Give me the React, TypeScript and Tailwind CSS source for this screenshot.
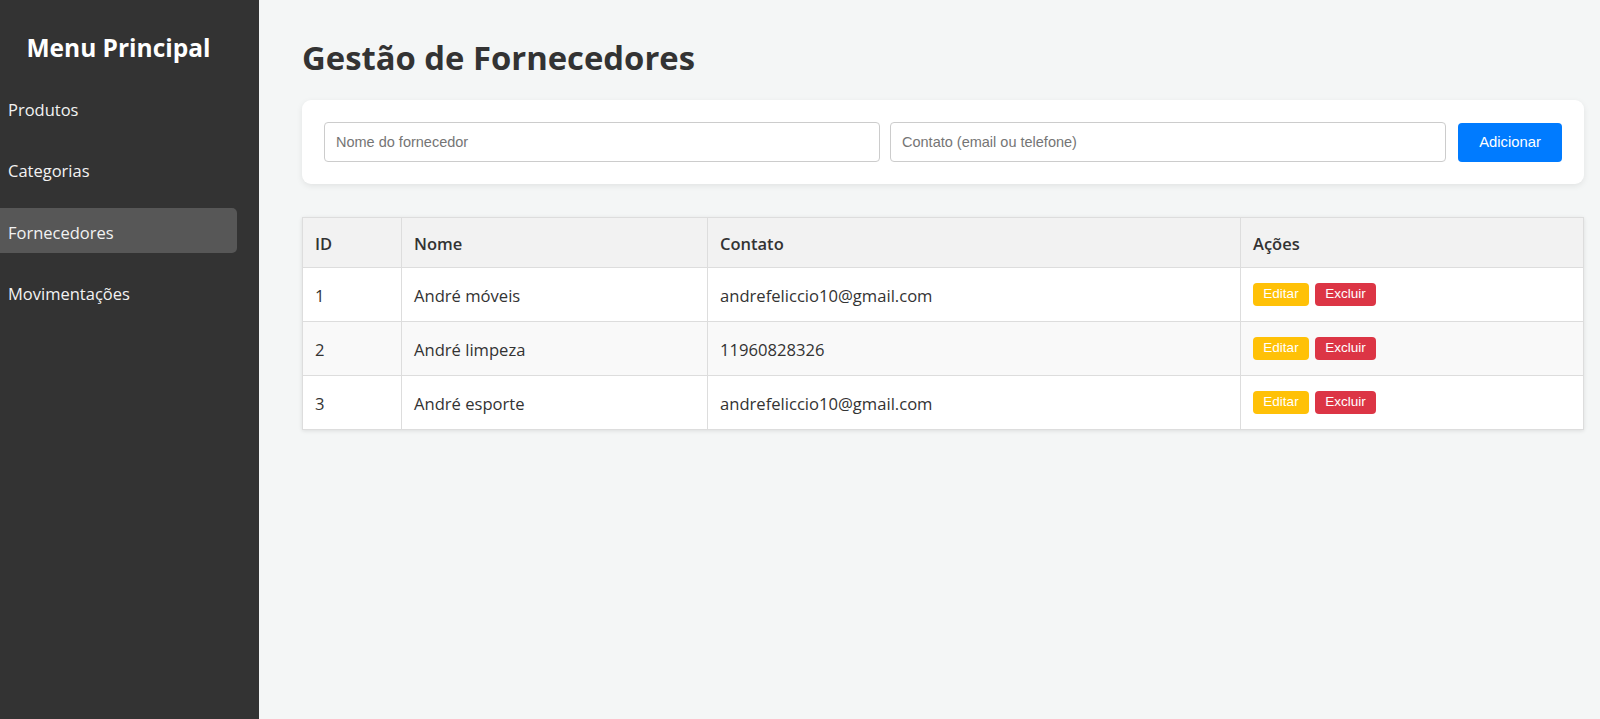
import React from 'react';

const menu = ['Produtos', 'Categorias', 'Fornecedores', 'Movimentações'];

const suppliers = [
  { id: 1, nome: 'André móveis', contato: 'andrefeliccio10@gmail.com' },
  { id: 2, nome: 'André limpeza', contato: '11960828326' },
  { id: 3, nome: 'André esporte', contato: 'andrefeliccio10@gmail.com' },
];

function Sidebar() {
  return (
    <aside className="w-[259px] shrink-0 bg-[#333333] pr-[22px] pt-[31px] text-white">
      <h2 className="text-center text-[24.5px] font-bold leading-[34px]">Menu Principal</h2>
      <ul className="mt-[20px] flex flex-col gap-[16.5px]">
        {menu.map((item) => (
          <li key={item}>
            <a
              href="#"
              className={`flex h-[45px] items-center rounded-r-[5px] pl-[8px] pt-[5px] text-[16.5px] text-[#f2f2f2] ${
                item === 'Fornecedores' ? 'bg-[#575757]' : ''
              }`}
            >
              {item}
            </a>
          </li>
        ))}
      </ul>
    </aside>
  );
}

export default function App() {
  return (
    <div className="flex h-screen min-h-[719px] font-['Open_Sans',sans-serif] text-[#333333]">
      <Sidebar />
      <main className="flex-1 bg-[#f4f6f6] pl-[43px] pr-[16px] pt-[39px]">
        <h1 className="text-[32.8px] font-bold leading-[38px] text-[#333333]">Gestão de Fornecedores</h1>

        {/* Form */}
        <div className="mt-[23px] flex items-center gap-[10px] rounded-[9px] bg-white p-[22px] shadow-[0_2px_6px_rgba(0,0,0,0.08)] font-['Liberation_Sans',Arial,sans-serif]">
          <input
            type="text"
            placeholder="Nome do fornecedor"
            className="h-[40px] min-w-0 flex-1 rounded-[4px] border border-[#cccccc] px-[11px] text-[14.5px] text-[#333] outline-none placeholder:text-[#757575]"
          />
          <input
            type="text"
            placeholder="Contato (email ou telefone)"
            className="h-[40px] min-w-0 flex-1 rounded-[4px] border border-[#cccccc] px-[11px] text-[14.5px] text-[#333] outline-none placeholder:text-[#757575]"
          />
          <button className="ml-[2px] h-[39px] w-[104px] rounded-[4px] bg-[#007bff] text-[14.8px] text-white">
            Adicionar
          </button>
        </div>

        {/* Table */}
        <table className="mt-[33px] w-full table-fixed border-collapse bg-white shadow-[0_1px_4px_rgba(0,0,0,0.1)]">
          <colgroup>
            <col className="w-[99px]" />
            <col className="w-[306px]" />
            <col className="w-[533px]" />
            <col />
          </colgroup>
          <thead>
            <tr className="bg-[#f2f2f2]">
              {['ID', 'Nome', 'Contato', 'Ações'].map((h) => (
                <th
                  key={h}
                  className="h-[50px] border border-[#dddddd] px-[12px] pt-[3px] text-left text-[16.5px] font-semibold"
                >
                  {h}
                </th>
              ))}
            </tr>
          </thead>
          <tbody>
            {suppliers.map((s, i) => (
              <tr key={s.id} className={i % 2 === 1 ? 'bg-[#f9f9f9]' : 'bg-white'}>
                <td className="h-[54px] border border-[#dddddd] px-[12px] pt-[4px] text-[16.6px]">{s.id}</td>
                <td className="h-[54px] border border-[#dddddd] px-[12px] pt-[4px] text-[16.6px]">{s.nome}</td>
                <td className="h-[54px] border border-[#dddddd] px-[12px] pt-[4px] text-[16.6px]">{s.contato}</td>
                <td className="h-[54px] border border-[#dddddd] px-[12px]">
                  <div className="flex gap-[6px] font-['Liberation_Sans',Arial,sans-serif]">
                    <button className="h-[23px] w-[56px] rounded-[4px] bg-[#ffc107] text-[13.5px] text-white">
                      Editar
                    </button>
                    <button className="h-[23px] w-[61px] rounded-[4px] bg-[#dc3545] text-[13.5px] text-white">
                      Excluir
                    </button>
                  </div>
                </td>
              </tr>
            ))}
          </tbody>
        </table>
      </main>
    </div>
  );
}
